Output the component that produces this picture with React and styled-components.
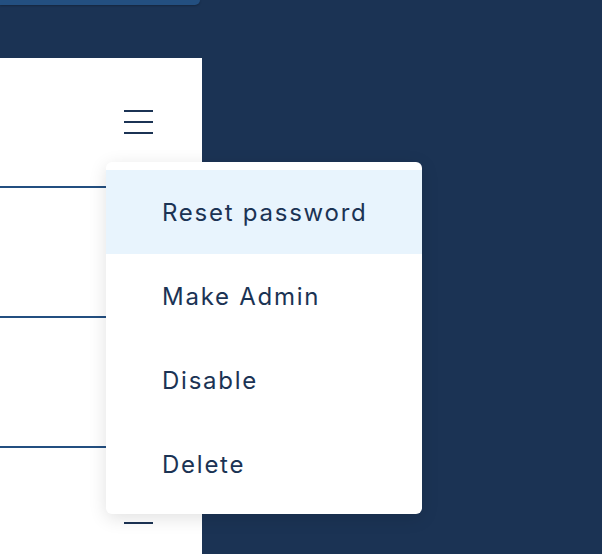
import React from "react";
import styled, { createGlobalStyle } from "styled-components";

const GlobalStyle = createGlobalStyle`
  html, body {
    margin: 0;
    padding: 0;
    background: #1b3354;
    font-family: Inter, "Noto Sans", sans-serif;
  }
  #root {
    height: 554px;
    overflow: hidden;
  }
`;

const Page = styled.div`
  position: relative;
  width: 602px;
  height: 554px;
  overflow: hidden;
  background: #1b3354;
`;

const TopBar = styled.div`
  width: 200px;
  height: 5px;
  background: #234f80;
  border-bottom-right-radius: 6px;
  box-shadow: 0 1px 2px rgba(0, 0, 0, 0.25);
`;

const Panel = styled.div`
  margin-top: 53px;
  width: 202px;
  height: 496px;
  background: #fff;
  display: flex;
  flex-direction: column;
`;

const Row = styled.div`
  height: 128px;
  flex-shrink: 0;
  border-bottom: 2px solid #234f80;
  display: flex;
  align-items: center;
  justify-content: flex-end;
  padding-right: 49px;
`;

const Burger = styled.div`
  width: 29px;
  display: flex;
  flex-direction: column;
  gap: 9.3px;
  span {
    display: block;
    height: 2px;
    background: #1b3354;
  }
`;

const Menu = styled.div`
  position: absolute;
  left: 106px;
  top: 162px;
  width: 316px;
  padding: 8px 0;
  background: #fff;
  border-radius: 6px;
  box-shadow: 0 4px 18px rgba(0, 0, 0, 0.12);
  display: flex;
  flex-direction: column;
`;

const Item = styled.div`
  height: 84px;
  display: flex;
  align-items: center;
  padding-left: 56px;
  font-size: 24px;
  letter-spacing: 1.75px;
  color: #1b3354;
  background: ${(p) => (p.active ? "#e8f4fd" : "transparent")};
`;

const items = ["Reset password", "Make Admin", "Disable", "Delete"];

function Hamburger() {
  return (
    <Burger>
      <span />
      <span />
      <span />
    </Burger>
  );
}

export default function App() {
  return (
    <Page>
      <GlobalStyle />
      <TopBar />
      <Panel>
        {[0, 1, 2, 3].map((i) => (
          <Row key={i}>
            <Hamburger />
          </Row>
        ))}
      </Panel>
      <Menu>
        {items.map((t, i) => (
          <Item key={t} active={i === 0}>
            {t}
          </Item>
        ))}
      </Menu>
    </Page>
  );
}
